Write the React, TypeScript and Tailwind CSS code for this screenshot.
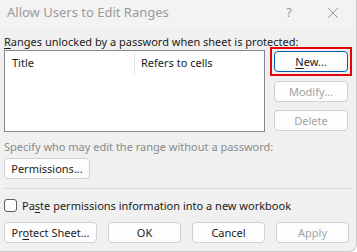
const font = { fontFamily: '"Noto Sans", "Open Sans", sans-serif' };

function Btn({ w, disabled, children }: { w: string; disabled?: boolean; children: React.ReactNode }) {
  return (
    <div
      className={`${w} h-[21px] flex items-center justify-center rounded-[4px] border border-[#d0d0d0] bg-[#fdfdfd] text-[11px] leading-none ${
        disabled ? "text-[#a3a3a3]" : "text-[#1b1b1b]"
      }`}
    >
      {children}
    </div>
  );
}

export default function App() {
  return (
    <div className="w-[357px] h-[252px] bg-white" style={font}>
      <div className="w-[357px] h-[252px] bg-[#f0f0f0] rounded-br-[8px] border-r border-b border-[#c8c8c8] flex flex-col">
        {/* Title bar */}
        <div className="h-[26px] bg-[#f3f3f3] flex items-center pl-[7px] text-[13px] text-[#9b9b9b]">
          <span className="flex-1">Allow Users to Edit Ranges</span>
          <span className="w-[10px] text-center mr-[33px] text-[13px]">?</span>
          <svg width="12" height="12" viewBox="0 0 12 12" className="mr-[17px]">
            <path d="M1 1 L11 11 M11 1 L1 11" stroke="#9b9b9b" strokeWidth="1" />
          </svg>
        </div>

        <div className="px-[4px] pt-[8px] flex flex-col text-[11px] text-[#1b1b1b]">
          <div className="leading-[16px] h-[16px]">
            <u className="underline-offset-2">R</u>anges unlocked by a password when sheet is protected:
          </div>

          <div className="flex">
            {/* List */}
            <div className="w-[263px] h-[82px] border border-[#848790] bg-white">
              <div className="h-[25px] flex items-center">
                <div className="w-[129px] pl-[7px]">Title</div>
                <div className="w-px h-[23px] bg-[#e5e5e5]" />
                <div className="pl-[6px]">Refers to cells</div>
              </div>
            </div>

            {/* Side buttons */}
            <div className="ml-[5px] flex flex-col">
              <div className="-mt-[3px] w-[82px] h-[29px] border-2 border-[#e8000b] p-[2px]">
                <div className="w-[74px] h-[21px] flex items-center justify-center rounded-[4px] border border-[#005fb8] bg-[#fdfdfd] text-[11px] leading-none">
                  <span>
                    <u className="underline-offset-2">N</u>ew...
                  </span>
                </div>
              </div>
              <div className="ml-[4px] mt-[5px]">
                <Btn w="w-[74px]" disabled>Modify...</Btn>
              </div>
              <div className="ml-[4px] mt-[8px]">
                <Btn w="w-[74px]" disabled>Delete</Btn>
              </div>
            </div>
          </div>

          <div className="mt-[7px] leading-[16px] text-[#8a8a8a]">
            Specify who may edit the range without a password:
          </div>
          <div className="mt-[3px]">
            <Btn w="w-[86px]">Permissions...</Btn>
          </div>

          <div className="mt-[9px] w-[348px] h-px bg-[#dadada]" />

          <div className="mt-[10px] flex items-center h-[13px]">
            <div className="w-[13px] h-[13px] rounded-[3px] border border-[#5c5c5c] bg-white" />
            <span className="ml-[5px] leading-none">
              Pa<u className="underline-offset-2">s</u>te permissions information into a new workbook
            </span>
          </div>

          <div className="mt-[10px] flex gap-[11px]">
            <Btn w="w-[93px]">
              <span>
                Pr<u className="underline-offset-2">o</u>tect Sheet...
              </span>
            </Btn>
            <Btn w="w-[73px]">OK</Btn>
            <Btn w="w-[73px]">Cancel</Btn>
            <Btn w="w-[73px]" disabled>Apply</Btn>
          </div>
        </div>
      </div>
    </div>
  );
}
